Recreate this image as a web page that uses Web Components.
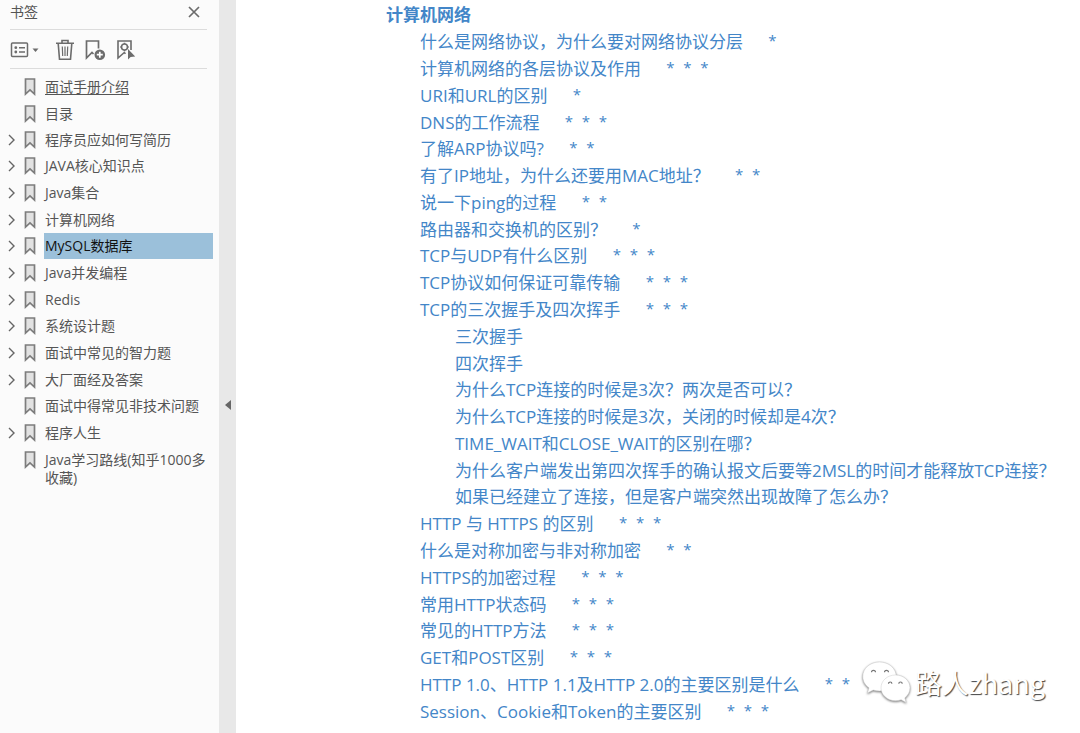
<!DOCTYPE html>
<html lang="zh-CN">
<head>
<meta charset="utf-8">
<meta name="viewport" content="width=device-width, initial-scale=1">
<title>书签</title>
<style>
  body { margin: 0; font-family: "Open Sans", "Noto Sans CJK SC", sans-serif; background: #fff; }
</style>
</head>
<body>
<pdf-reader></pdf-reader>
<script>
const define = (name, html, setup) => {
  const template = document.createElement('template');
  template.innerHTML = html;
  customElements.define(name, class extends HTMLElement {
    constructor() {
      super();
      this.attachShadow({ mode: 'open' }).append(template.content.cloneNode(true));
    }
    connectedCallback() { if (setup) setup(this, this.shadowRoot); }
  });
};

define('icon-button', `
  <style>
    :host { display: inline-flex; }
    button { display: flex; align-items: center; margin: 0; padding: 0; border: 0; background: none; color: #6c6c6c; cursor: pointer; }
  </style>
  <button type="button"><slot></slot></button>
`, (host, root) => root.querySelector('button').setAttribute('aria-label', host.getAttribute('label')));

define('bookmark-item', `
  <style>
    :host { display: block; color: #555; font-size: 14px; }
    .row { display: grid; grid-template-columns: 15px 15px 1fr; column-gap: 7px; align-items: start; }
    .arrow, .mark { display: flex; align-items: center; height: 26px; }
    .arrow { color: #666; }
    :host([leaf]) .arrow { visibility: hidden; }
    button { display: flex; padding: 0; border: 0; background: none; color: inherit; }
    a { color: inherit; text-decoration: none; line-height: 18px; padding: 4px 0 4px 1px; }
    :host([underlined]) a { text-decoration: underline; text-underline-offset: 2px; }
    :host([selected]) a { background: #9bc0da; color: #111; }
  </style>
  <div class="row">
    <span class="arrow"><button type="button" aria-label="展开">
      <svg width="15" height="14" viewBox="0 0 15 14" fill="none" stroke="currentColor" stroke-width="1.4"><path d="M9 2l5 5-5 5"/></svg>
    </button></span>
    <span class="mark">
      <svg width="15" height="18" viewBox="0 0 15 18" fill="#e2e2e2" stroke="#7d7d7d" stroke-width="1.7"><path d="M3.500 1h9v15L8 11.800 3.500 16z"/></svg>
    </span>
    <a href="#"><slot></slot></a>
  </div>
`);

define('bookmark-panel', `
  <style>
    :host { display: block; box-sizing: border-box; padding: 0 6px 0 0; background: #fbfbfb; }
    header, .tools { display: flex; align-items: center; box-sizing: border-box; margin: 0 6px 0 10px; border-bottom: 1px solid #dcdcdc; }
    header { height: 30px; padding: 0 6px 6px 0; justify-content: space-between; }
    h2 { margin: 0; font-size: 14px; line-height: 20px; font-weight: 400; color: #555; }
    .tools { height: 39px; gap: 9px; padding-top: 2px; }
    .view { margin-right: 7px; }
    nav { display: block; padding-top: 5px; }
    ul { list-style: none; margin: 0; padding: 0; }
    li { min-height: 27px; }
    li:nth-child(3n), li:nth-child(2) { min-height: 26px; }
    bookmark-item { min-height: 26px; }
  </style>
  <header>
    <h2>书签</h2>
    <icon-button label="关闭">
      <svg width="14" height="14" viewBox="0 0 14 14" fill="none" stroke="currentColor" stroke-width="1.7"><path d="M2 2l10 10M12 2L2 12"/></svg>
    </icon-button>
  </header>
  <div class="tools">
    <icon-button class="view" label="选项">
      <svg width="29" height="20" viewBox="0 0 29 20" fill="none" stroke="currentColor" stroke-width="1.500"><rect x="1.500" y="3" width="16" height="13.500" rx="1"/><path d="M9 7.700h6M9 12h6"/><circle cx="5.800" cy="7.700" r="1.400" fill="currentColor" stroke="none"/><circle cx="5.800" cy="12" r="1.400" fill="currentColor" stroke="none"/><path d="M22.500 8.500h6l-3 3.500z" fill="currentColor" stroke="none"/></svg>
    </icon-button>
    <icon-button label="删除书签">
      <svg width="20" height="22" viewBox="0 0 20 22" fill="none" stroke="currentColor" stroke-width="1.600"><path d="M1 4.300h18M7 4V1.500h6V4M3.200 4.500l1.300 15.700h11L16.800 4.500"/><path d="M7.300 7.500l.4 9.500M10 7.500V17M12.700 7.500l-.4 9.500" stroke-width="1.200"/></svg>
    </icon-button>
    <icon-button label="新建书签">
      <svg width="22" height="22" viewBox="0 0 22 22" fill="none" stroke="currentColor" stroke-width="1.700"><path d="M9.500 15L8 13.500 2.500 19V2h12v7.500"/><circle cx="15.800" cy="15.700" r="5.300" fill="currentColor" stroke="none"/><path d="M15.800 12.700v6M12.800 15.700h6" stroke="#fff"/></svg>
    </icon-button>
    <icon-button label="查找当前书签">
      <svg width="22" height="22" viewBox="0 0 22 22" fill="none" stroke="currentColor" stroke-width="1.600"><path d="M10.500 14.700L9.300 13.500 3 19V2h13v9"/><circle cx="9.500" cy="8" r="3"/><path d="M9.500 3.800V5M9.500 11v1.200M5.300 8h1.200M12.500 8h1.200"/><path d="M13 10v10.500l2.600-2.600 4.600-.4z" fill="currentColor" stroke="none"/></svg>
    </icon-button>
  </div>
  <nav aria-label="书签">
    <ul>
      <li><bookmark-item leaf underlined>面试手册介绍</bookmark-item></li>
      <li><bookmark-item leaf>目录</bookmark-item></li>
      <li><bookmark-item>程序员应如何写简历</bookmark-item></li>
      <li><bookmark-item>JAVA核心知识点</bookmark-item></li>
      <li><bookmark-item>Java集合</bookmark-item></li>
      <li><bookmark-item>计算机网络</bookmark-item></li>
      <li><bookmark-item selected>MySQL数据库</bookmark-item></li>
      <li><bookmark-item>Java并发编程</bookmark-item></li>
      <li><bookmark-item>Redis</bookmark-item></li>
      <li><bookmark-item>系统设计题</bookmark-item></li>
      <li><bookmark-item>面试中常见的智力题</bookmark-item></li>
      <li><bookmark-item>大厂面经及答案</bookmark-item></li>
      <li><bookmark-item leaf>面试中得常见非技术问题</bookmark-item></li>
      <li><bookmark-item>程序人生</bookmark-item></li>
      <li><bookmark-item leaf>Java学习路线(知乎1000多收藏)</bookmark-item></li>
    </ul>
  </nav>
`);

define('panel-handle', `
  <style>
    :host { display: flex; align-items: center; justify-content: center; background: #e8e8e8; }
    icon-button { margin-top: 76px; }
  </style>
  <icon-button label="收起面板"><svg width="8" height="12" viewBox="0 0 8 12"><path d="M7 1v10L1 6z" fill="#666"/></svg></icon-button>
`);

define('toc-entry', `
  <style>
    :host { display: flex; align-items: center; flex: 1 0 26px; padding-left: 34px; font-size: 17px; line-height: 26px; color: #4386c8; white-space: nowrap; }
    :host([level="0"]) { padding-left: 0; font-weight: 700; }
    :host([level="2"]) { padding-left: 69px; }
    a { color: inherit; text-decoration: none; }
    .stars { display: inline-flex; margin-left: 21px; padding-bottom: 4px; font-size: 15px; line-height: 22px; }
    .stars span { width: 17px; text-align: center; }
  </style>
  <a href="#"><slot></slot></a>
`, (host, root) => {
  const count = Number(host.getAttribute('stars') || 0);
  if (!count) return;
  const stars = document.createElement('span');
  stars.className = 'stars';
  for (let i = 0; i < count; i++) {
    const star = document.createElement('span');
    star.textContent = '*';
    stars.append(star);
  }
  root.append(stars);
});

define('toc-page', `
  <style>
    :host { display: flex; flex-direction: column; box-sizing: border-box; padding: 2px 0 8px 150px; background: #fff; }
  </style>
  <slot></slot>
`);

define('page-watermark', `
  <style>
    :host { display: flex; align-items: center; gap: 4px; font-size: 27px; line-height: 40px; font-family: "Noto Sans CJK SC", sans-serif; font-weight: 400; color: #fff; text-shadow: 1px 1px 1px #444; white-space: nowrap; }
    svg { filter: drop-shadow(0 1px 1px #777); }
  </style>
  <svg width="49" height="43" viewBox="0 0 49 43" fill="#fff" stroke="#ccc" stroke-width=".5">
    <path d="M17.500 1C8 1 .8 7.400.8 15.500c0 4.700 2.400 8.600 6.200 11.300L5.500 32l5.700-3c2 .6 4 .9 6.300.9C27 29.900 34.200 23.500 34.200 15.500S27 1 17.500 1z"/>
    <path d="M33.500 14C25.300 14 19 19.700 19 26.800s6.300 12.900 14.500 12.900c2 0 3.900-.4 5.600-1l5 2.800-1.300-4.600c3.200-2.400 5.200-6 5.200-10.100C48 19.700 41.700 14 33.500 14z"/>
    <g fill="none" stroke="#777" stroke-width="1.200"><path d="M9.500 11.300a2 2 0 014 0M22.500 11.300a2 2 0 014 0M26.500 22.700a1.700 1.700 0 013.400 0M36.800 22.700a1.700 1.700 0 013.400 0"/></g>
  </svg>
  <span>路人zhang</span>
`);

define('pdf-reader', `
  <style>
    :host { position: relative; display: grid; grid-template-columns: 219px 17px 1fr; min-height: 100vh; }
    page-watermark { position: absolute; right: 35px; bottom: 29px; }
  </style>
  <bookmark-panel></bookmark-panel>
  <panel-handle></panel-handle>
  <toc-page>
    <toc-entry level="0">计算机网络</toc-entry>
    <toc-entry stars="1">什么是网络协议，为什么要对网络协议分层</toc-entry>
    <toc-entry stars="3">计算机网络的各层协议及作用</toc-entry>
    <toc-entry stars="1">URI和URL的区别</toc-entry>
    <toc-entry stars="3">DNS的工作流程</toc-entry>
    <toc-entry stars="2">了解ARP协议吗?</toc-entry>
    <toc-entry stars="2">有了IP地址，为什么还要用MAC地址？</toc-entry>
    <toc-entry stars="2">说一下ping的过程</toc-entry>
    <toc-entry stars="1">路由器和交换机的区别？</toc-entry>
    <toc-entry stars="3">TCP与UDP有什么区别</toc-entry>
    <toc-entry stars="3">TCP协议如何保证可靠传输</toc-entry>
    <toc-entry stars="3">TCP的三次握手及四次挥手</toc-entry>
    <toc-entry level="2">三次握手</toc-entry>
    <toc-entry level="2">四次挥手</toc-entry>
    <toc-entry level="2">为什么TCP连接的时候是3次？两次是否可以？</toc-entry>
    <toc-entry level="2">为什么TCP连接的时候是3次，关闭的时候却是4次？</toc-entry>
    <toc-entry level="2">TIME_WAIT和CLOSE_WAIT的区别在哪？</toc-entry>
    <toc-entry level="2">为什么客户端发出第四次挥手的确认报文后要等2MSL的时间才能释放TCP连接？</toc-entry>
    <toc-entry level="2">如果已经建立了连接，但是客户端突然出现故障了怎么办？</toc-entry>
    <toc-entry stars="3">HTTP 与 HTTPS 的区别</toc-entry>
    <toc-entry stars="2">什么是对称加密与非对称加密</toc-entry>
    <toc-entry stars="3">HTTPS的加密过程</toc-entry>
    <toc-entry stars="3">常用HTTP状态码</toc-entry>
    <toc-entry stars="3">常见的HTTP方法</toc-entry>
    <toc-entry stars="3">GET和POST区别</toc-entry>
    <toc-entry stars="2">HTTP 1.0、HTTP 1.1及HTTP 2.0的主要区别是什么</toc-entry>
    <toc-entry stars="3">Session、Cookie和Token的主要区别</toc-entry>
  </toc-page>
  <page-watermark></page-watermark>
`);
</script>
</body>
</html>
